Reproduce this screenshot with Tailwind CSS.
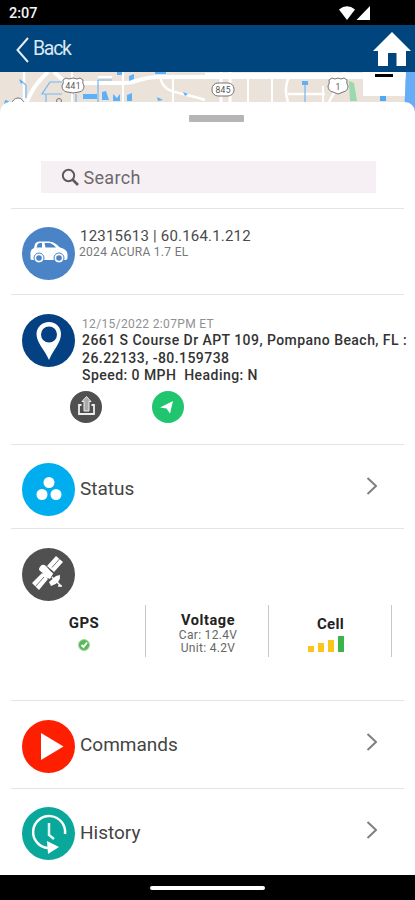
<!DOCTYPE html>
<html lang="en">
<head>
  <meta charset="UTF-8">
  <meta name="viewport" content="width=device-width, initial-scale=1.0">
  <title>Vehicle Details</title>
  <script src="https://cdn.jsdelivr.net/npm/@tailwindcss/browser@4"></script>
  <style>
    body {
      font-family: Roboto, sans-serif;
    }
  </style>
</head>
<body class="w-[415px] h-[900px] overflow-hidden bg-white flex flex-col text-[#444]">
  <!-- Status bar -->
  <div class="h-[25px] shrink-0 bg-black flex items-center justify-between pl-[9px] pr-[45px] pt-[2px]">
    <span class="text-[14.5px] font-medium text-gray-100 leading-none mt-[2px]">2:07</span>
    <svg class="w-[31px] h-[14px] -mt-[1px]" viewBox="0 0 31 14" fill="#fff">
      <path d="M0 3.5Q8-3 16 3.5L8 14Z"/>
      <path d="M31 0V14H17.500Z"/>
    </svg>
  </div>

  <!-- Header -->
  <header class="h-[47px] shrink-0 bg-[#00457e] flex items-center justify-between pl-[16px]">
    <a class="flex items-center">
      <svg class="w-[13px] h-[26px] mt-[2px]" viewBox="0 0 13 26" fill="none" stroke="#e4edf5" stroke-width="2"><path d="M12 1L1.500 13L12 25"/></svg>
      <span class="text-[19.500px] tracking-[-1.300px] text-[#dce8f2] ml-[4px] leading-none">Back</span>
    </a>
    <svg class="w-[38px] h-[36px] mt-[3px] mr-[4px]" viewBox="0 0 38 36" fill="#fff">
      <path d="M19 0L38 19H33V34H23.500V21H15V34H5V19H0Z"/>
    </svg>
  </header>

  <!-- Map strip -->
  <svg class="w-[415px] h-[42px] shrink-0" viewBox="0 0 415 42">
    <rect width="415" height="42" fill="#ebe2da"/>
    <g fill="none" stroke="#fff">
      <path d="M23 42C28 23 35 12 48 0" stroke-width="4"/>
      <path d="M24 0V29" stroke-width="2.500"/>
      <path d="M54 0L66 11H125C140 11 137 5 160 5H415" stroke-width="4"/>
      <path d="M160 5C165 24 177 18 205 28" stroke-width="2.500"/>
      <path d="M72 0V30M98 5H112M123 0V30M173 5V30M248 5V30M272 5V30M323 14V30" stroke-width="2"/>
      <path d="M221 0V32M230 0V32" stroke-width="3"/>
      <path d="M205 2H415M288 22H325M290 3Q283 16 288 30M345 0L329 30" stroke-width="2.500"/>
    </g>
    <g fill="none" stroke="#70b8f5" stroke-width="1.200">
      <path d="M62 10H50L42 22H46V31M98 8V30M76 22V30M47 22H62M98 8H112M20 8L26 13V26"/>
      <path d="M305 12V30"/>
    </g>
    <g fill="#5eb1f8">
      <path d="M83 22H97V27H83ZM102 20L106 19L109 28H102ZM113 22L117 26L120 22V29H113ZM127 23L132 21V29H127ZM129 4L134 2V7L129 9ZM117 0H122V3H117ZM155 0H166V2H155ZM183 20L188 22L185 24ZM19 7L23 10L21 12ZM5 28L9 29L6 33H4ZM157 25L163 28L158 29Z"/>
      <path d="M302 9H308V13H302Z"/>
      <path d="M406 0H415V42H404Z" fill="#66adf8"/>
      <path d="M0 39H3V42H0Z" fill="#9ddb9a"/>
    </g>
    <path d="M349 9L354 11L357 29H350Z" fill="#9ad8ad"/>
    <path d="M380 24h6v5h-6z" fill="#4fa9f7"/>
    <rect x="363" y="0" width="42" height="24" fill="#fff"/>
    <rect x="375" y="2" width="18" height="3" fill="#000"/>
    <g fill="#fff" stroke="#777" stroke-width="1">
      <path d="M63 8L66 6L69 7L73 6L77 7L80 6L83 8Q82 11 84 14Q84 19 79 20L73 21L67 20Q62 19 62 14Q64 11 63 8Z"/>
      <rect x="212" y="11" width="22" height="13" rx="6"/>
      <path d="M329 8L332 6L335 7L338 6L341 7L344 6L347 8Q346 11 348 14Q348 19 343 20L338 22L333 20Q328 19 328 14Q330 11 329 8Z"/>
      <circle cx="18" cy="32" r="6"/>
    </g>
    <circle cx="59" cy="29" r="2.500" fill="none" stroke="#777"/>
    <g font-size="8.500" fill="#555" text-anchor="middle">
      <text x="73" y="17" textLength="15">441</text>
      <text x="223" y="21" textLength="15">845</text>
      <text x="338" y="18">1</text>
    </g>
  </svg>

  <!-- Sheet -->
  <main class="relative -mt-[12px] h-[773px] shrink-0 bg-white rounded-t-[10px] px-[11px]">
    <div class="h-[106px] flex flex-col items-center pt-[13px]">
      <div class="w-[55px] h-[7px] ml-[18px] bg-[#b5b5b5] rounded-[1px]"></div>
      <div class="mt-[39px] w-[335px] h-[32px] mr-[-1px] bg-[#f6f0f5] flex items-center pl-[20px]">
        <svg class="w-[19px] h-[19px]" viewBox="0 0 19 19" fill="none" stroke="#5c5a5c"><circle cx="7.500" cy="7.500" r="5.700" stroke-width="2"/><path d="M11.500 11.500L17 17" stroke-width="2.600"/></svg>
        <span class="text-[18px] tracking-[0.3px] text-[#6c696c] ml-[4px]">Search</span>
      </div>
    </div>

    <!-- Vehicle -->
    <section class="h-[86px] border-t border-[#e4e4e4] pl-[11px] pt-[18px] flex">
      <svg class="w-[53px] h-[53px] shrink-0" viewBox="0 0 53 53">
        <circle cx="26.500" cy="26.500" r="26.500" fill="#4a83c6"/>
        <path d="M8.500 32V25Q9 22 12 21L13 17Q14 14.500 17 14.500H27Q31 14.500 34 17L38 20.500Q45 22 45.500 27V31Q45.500 33 43 33H11Q8.500 33 8.500 32Z" fill="#fff"/>
        <path d="M14.500 20.500L15.500 17.500Q16 16 18 16H20V20.500ZM22.500 16H27Q30 16 34 20.500H23.500Z" fill="#4a83c6"/>
        <g fill="#fff" stroke="#4a83c6" stroke-width="1"><circle cx="17" cy="31" r="5"/><circle cx="37" cy="31" r="5"/></g>
        <g fill="#4a83c6"><circle cx="17" cy="31" r="2.800"/><circle cx="37" cy="31" r="2.800"/></g>
      </svg>
      <div class="ml-[5px]">
        <p class="text-[15px] leading-[18px] tracking-[0.2px] text-[#4a4a4a]">12315613 | 60.164.1.212</p>
        <p class="text-[12px] leading-[15px] tracking-[0.300px] -ml-[1px] text-[#777]">2024 ACURA 1.7 EL</p>
      </div>
    </section>

    <!-- Location -->
    <section class="h-[150px] border-t border-[#e4e4e4] pl-[11px] pt-[19px] flex">
      <svg class="w-[53px] h-[53px] shrink-0" viewBox="0 0 53 53">
        <circle cx="26.500" cy="26.500" r="26.500" fill="#034182"/>
        <path fill="#fff" fill-rule="evenodd" d="M27 8C20 8 14.500 13 14.500 20C14.500 29 23 36 27 46C31 36 39 29 39 20C39 13 34 8 27 8ZM27 12.500A8 8 0 1 1 27 28.500A8 8 0 1 1 27 12.500Z"/>
      </svg>
      <div class="ml-[7px] w-[325px] shrink-0">
        <p class="text-[12px] leading-[17px] tracking-[0.350px] mt-[2px] text-[#909090]">12/15/2022 2:07PM ET</p>
        <div class="text-[14px] leading-[17.500px] -mt-[1px] tracking-[0.450px] font-medium text-[#333] whitespace-nowrap">
          <p>2661 S Course Dr APT 109, Pompano Beach, FL :</p>
          <p>26.22133, -80.159738</p>
          <p>Speed: 0 MPH&nbsp; Heading: N</p>
        </div>
        <div class="flex gap-[50px] mt-[6px] -ml-[12px]">
          <svg class="w-[32px] h-[32px]" viewBox="0 0 32 32">
            <circle cx="16" cy="16" r="16" fill="#505050"/>
            <path d="M11.500 14H9V23H24V14H21.500" fill="none" stroke="#eee" stroke-width="1.800"/>
            <path d="M16.500 5.500L21 10.500H19V20H14V10.500H12Z" fill="#aaa" stroke="#eee"/>
          </svg>
          <svg class="w-[32px] h-[32px]" viewBox="0 0 32 32">
            <circle cx="16" cy="16" r="16" fill="#20c66f"/>
            <path d="M21 10L8 16.500L14.500 17.500L18 22.500Z" fill="#fff"/>
          </svg>
        </div>
      </div>
    </section>

    <!-- Status -->
    <section class="h-[84px] border-t border-[#e4e4e4] pl-[11px] pr-[27px] flex items-center">
      <svg class="w-[53px] h-[53px] mt-[5px]" viewBox="0 0 53 53">
        <circle cx="26.500" cy="26.500" r="26.500" fill="#00aeef"/>
        <g fill="#fff"><circle cx="27" cy="19.500" r="5.500"/><circle cx="20" cy="31.500" r="5.500"/><circle cx="34" cy="31.500" r="5.500"/></g>
      </svg>
      <span class="ml-[5px] text-[19px] mt-[6px]">Status</span>
      <svg class="ml-auto w-[11px] h-[18px] -mt-[1px]" viewBox="0 0 11 18" fill="none" stroke="#808080" stroke-width="2"><path d="M1.500 1L10 9L1.500 17"/></svg>
    </section>

    <!-- Signals -->
    <section class="h-[172px] border-t border-[#e4e4e4] pt-[19px]">
      <svg class="w-[53px] h-[53px] ml-[11px]" viewBox="0 0 53 53">
        <circle cx="26.500" cy="26.500" r="26.500" fill="#505050"/>
        <g fill="#fff">
          <path d="M34 8L41 14L32 24L25 18ZM20 25L26 31L17 42L10 35Z"/>
          <path d="M18 19Q20 15 24 18L31 26L28 30L18 23Q16 21 18 19Z"/>
          <path d="M22 21L31 25L28 31L20 28Z"/>
          <path d="M38 27Q39 35 29 38L27 34L34 28Z"/>
        </g>
        <g stroke="#505050" stroke-width=".8" fill="none"><path d="M37.500 11L30 19.500M22 29L13.500 38.500"/></g>
        <path d="M30 29L39 38M36 38H40" stroke="#fff" stroke-width="1.500"/>
      </svg>
      <div class="grid grid-cols-3 w-[369px] h-[52px] mt-[4px] ml-[12px] text-center text-[#222]">
        <div class="border-r border-[#c8c8c8] pt-[9px] flex flex-col items-center">
          <h3 class="text-[15px] leading-[18px] tracking-[0.500px] font-bold">GPS</h3>
          <svg class="w-[12px] h-[12px] mt-[7px]" viewBox="0 0 12 12"><circle cx="6" cy="6" r="5.500" fill="#58b85a" stroke="#a5d9a6"/><path d="M3.500 6L5.500 8L9 3.500" fill="none" stroke="#fff" stroke-width="2"/></svg>
        </div>
        <div class="border-r border-[#c8c8c8] pt-[7px] pl-[2px]">
          <h3 class="text-[14.500px] leading-[17px] tracking-[0.600px] font-bold">Voltage</h3>
          <p class="text-[12px] leading-[12.500px] tracking-[0.300px] text-[#666]">Car: 12.4V</p>
          <p class="text-[12px] leading-[12.500px] tracking-[0.300px] text-[#666]">Unit: 4.2V</p>
        </div>
        <div class="border-r border-[#c8c8c8] pt-[10px] pl-[1px] flex flex-col items-center">
          <h3 class="text-[15px] leading-[18px] tracking-[0.300px] font-bold">Cell</h3>
          <div class="flex items-end gap-[4px] mt-[3px] -ml-[9px]">
            <div class="w-[6px] h-[6px] bg-[#fbc51b]"></div>
            <div class="w-[6px] h-[9px] bg-[#fbc51b]"></div>
            <div class="w-[6px] h-[12px] bg-[#fbc51b]"></div>
            <div class="w-[6px] h-[16px] bg-[#3cb44a]"></div>
          </div>
        </div>
      </div>
    </section>

    <!-- Commands -->
    <section class="h-[88px] border-t border-[#e4e4e4] pl-[11px] pr-[27px] flex items-center">
      <svg class="w-[53px] h-[53px] mt-[3px]" viewBox="0 0 53 53">
        <circle cx="26.500" cy="26.500" r="26.500" fill="#fe1f00"/>
        <path d="M19 13L41.500 26.500L19 40Z" fill="#fff"/>
      </svg>
      <span class="ml-[5px] text-[19px] mt-[2px]">Commands</span>
      <svg class="ml-auto w-[11px] h-[18px] -mt-[5px]" viewBox="0 0 11 18" fill="none" stroke="#808080" stroke-width="2"><path d="M1.500 1L10 9L1.500 17"/></svg>
    </section>

    <!-- History -->
    <section class="h-[87px] border-t border-[#e4e4e4] pl-[11px] pr-[27px] flex items-center">
      <svg class="w-[53px] h-[53px] mt-[3px]" viewBox="0 0 53 53">
        <circle cx="26.500" cy="26.500" r="26.500" fill="#0aa79b"/>
        <path d="M43 27A16 16 0 1 0 26 41" fill="none" stroke="#fff" stroke-width="2.500"/>
        <path d="M25 34L37 40L26 47Z" fill="#fff"/>
        <path d="M27 16V28L32 32" fill="none" stroke="#e2f5f3" stroke-width="2.500"/>
      </svg>
      <span class="ml-[5px] text-[19px] mt-[2px]">History</span>
      <svg class="ml-auto w-[11px] h-[18px] -mt-[5px]" viewBox="0 0 11 18" fill="none" stroke="#808080" stroke-width="2"><path d="M1.500 1L10 9L1.500 17"/></svg>
    </section>
  </main>

  <!-- Navigation bar -->
  <footer class="relative h-[25px] shrink-0 bg-black flex justify-center items-center">
    <div class="w-[115px] h-[4px] rounded-full bg-white"></div>
  </footer>
</body>
</html>
